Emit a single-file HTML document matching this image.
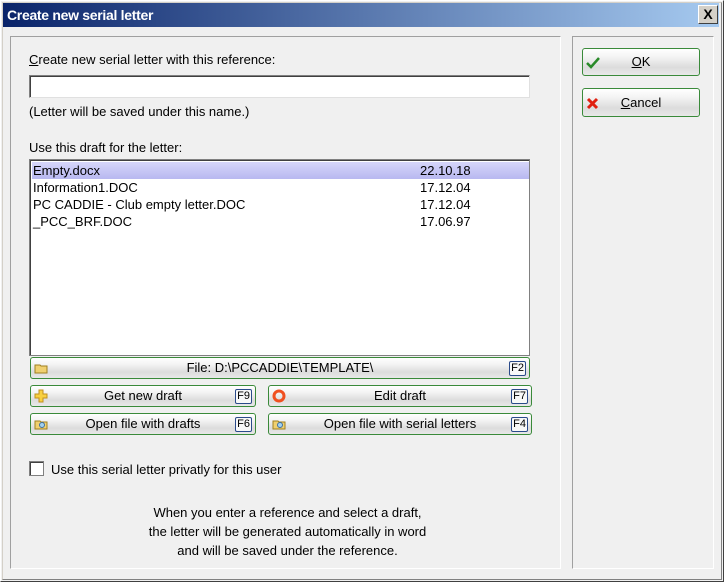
<!DOCTYPE html>
<html><head><style>
*{box-sizing:border-box;margin:0;padding:0}
body{width:724px;height:582px;background:#d4d0c8;font-family:"Liberation Sans",sans-serif;font-size:13px;color:#000;position:relative;overflow:hidden}
.win{position:absolute;left:0;top:0;width:724px;height:582px;border:1px solid #fff;border-right-color:#404040;border-bottom-color:#404040;background:#f0f0f0}
.win2{position:absolute;left:1px;top:1px;right:1px;bottom:1px;border:1px solid #d4d0c8;border-right-color:#808080;border-bottom-color:#808080;}
.title{position:absolute;left:3px;top:3px;width:716px;height:24px;background:linear-gradient(90deg,#0a246a,#a6caf0);color:#fff;font-weight:bold;font-size:14px;line-height:24px;padding-left:4px;letter-spacing:-0.3px}
.close{position:absolute;left:698px;top:5px;width:20px;height:19px;background:#d4d0c8;border:1px solid #fff;border-right-color:#404040;border-bottom-color:#404040;color:#000;font-weight:bold;font-size:14px;line-height:17px;text-align:center}
.panel{position:absolute;border:1px solid #fff;border-left-color:#a0a0a0;border-top-color:#a0a0a0;}
.abs{position:absolute;white-space:nowrap}
.input{position:absolute;background:#fff;border:1px solid #808080;border-right-color:#e0e0e0;border-bottom-color:#e0e0e0;box-shadow:inset 1px 1px 0 #404040}
.btn{position:absolute;border:1px solid #3a8a3a;border-radius:3px;background:linear-gradient(#fff,#f4f4f4 30%,#dcdcdc 70%,#e8e8e8);text-align:center;line-height:20px}
.fk{position:absolute;right:3px;top:3px;height:15px;border:1px solid #2a4a8a;border-radius:2px;font-size:11px;line-height:13px;padding:0 1px;background:#f8f8f8}
.list{position:absolute;left:29px;top:159px;width:501px;height:197px;background:#fff;border:1px solid #808080;box-shadow:inset 1px 1px 0 #404040}
.row{position:absolute;left:2px;width:497px;height:17px;line-height:17px;padding-left:1px}
.row span{position:absolute;left:388px}
</style></head><body>
<div class="win"><div class="win2"></div></div>
<div class="title">Create new serial letter</div>
<div class="close">X</div>
<div class="panel" style="left:10px;top:36px;width:551px;height:533px"></div>
<div class="panel" style="left:572px;top:36px;width:142px;height:533px"></div>
<div class="abs" style="left:29px;top:52px"><u>C</u>reate new serial letter with this reference:</div>
<div class="input" style="left:29px;top:75px;width:501px;height:23px"></div>
<div class="abs" style="left:29px;top:104px">(Letter will be saved under this name.)</div>
<div class="abs" style="left:29px;top:140px">Use this draft for the letter:</div>
<div class="list">
<div class="row" style="top:2px;background:linear-gradient(#d6d6fa,#b8b8f0)">Empty.docx<span>22.10.18</span></div>
<div class="row" style="top:19px">Information1.DOC<span>17.12.04</span></div>
<div class="row" style="top:36px">PC CADDIE - Club empty letter.DOC<span>17.12.04</span></div>
<div class="row" style="top:53px">_PCC_BRF.DOC<span>17.06.97</span></div>
</div>
<div class="btn" style="left:30px;top:357px;width:500px;height:22px"><svg class="abs" style="left:3px;top:5px" width="15" height="11"><path d="M1 2h5l1 1h6v7H1z" fill="#f0d070" stroke="#a08020"/></svg>File: D:\PCCADDIE\TEMPLATE\<span class="fk">F2</span></div>
<div class="btn" style="left:30px;top:385px;width:226px;height:22px"><svg class="abs" style="left:3px;top:3px" width="14" height="14"><path d="M5 1h4v4h4v4H9v4H5V9H1V5h4z" fill="#f8d040" stroke="#c09020"/></svg>Get new draft<span class="fk">F9</span></div>
<div class="btn" style="left:268px;top:385px;width:264px;height:22px"><svg class="abs" style="left:3px;top:3px" width="14" height="14"><circle cx="7" cy="7" r="5" fill="none" stroke="#f05020" stroke-width="3"/></svg>Edit draft<span class="fk">F7</span></div>
<div class="btn" style="left:30px;top:413px;width:226px;height:22px"><svg class="abs" style="left:3px;top:5px" width="15" height="11"><path d="M1 2h5l1 1h6v7H1z" fill="#f0d070" stroke="#a08020"/><circle cx="8" cy="6" r="2.5" fill="#a0d0f0" stroke="#4070a0"/></svg>Open file with drafts<span class="fk">F6</span></div>
<div class="btn" style="left:268px;top:413px;width:264px;height:22px"><svg class="abs" style="left:3px;top:5px" width="15" height="11"><path d="M1 2h5l1 1h6v7H1z" fill="#f0d070" stroke="#a08020"/><circle cx="8" cy="6" r="2.5" fill="#a0d0f0" stroke="#4070a0"/></svg>Open file with serial letters<span class="fk">F4</span></div>
<div class="abs" style="left:29px;top:461px;width:15px;height:15px;background:#fff;border:1px solid #808080;box-shadow:inset 1px 1px 0 #404040"></div>
<div class="abs" style="left:51px;top:462px">Use this serial letter privatly for this user</div>
<div class="abs" style="left:60px;top:503px;width:455px;text-align:center;line-height:19px;white-space:normal">When you enter a reference and select a draft,<br>the letter will be generated automatically in word<br>and will be saved under the reference.</div>
<div class="btn" style="left:582px;top:48px;width:118px;height:28px;line-height:26px"><svg class="abs" style="left:3px;top:8px" width="14" height="12"><path d="M1 6l4 4 8-9" fill="none" stroke="#2a8a2a" stroke-width="2.5"/></svg><u>O</u>K</div>
<div class="btn" style="left:582px;top:88px;width:118px;height:29px;line-height:27px"><svg class="abs" style="left:3px;top:8px" width="13" height="13"><path d="M2 2l9 9M11 2l-9 9" stroke="#e02010" stroke-width="3"/></svg><u>C</u>ancel</div>
</body></html>
